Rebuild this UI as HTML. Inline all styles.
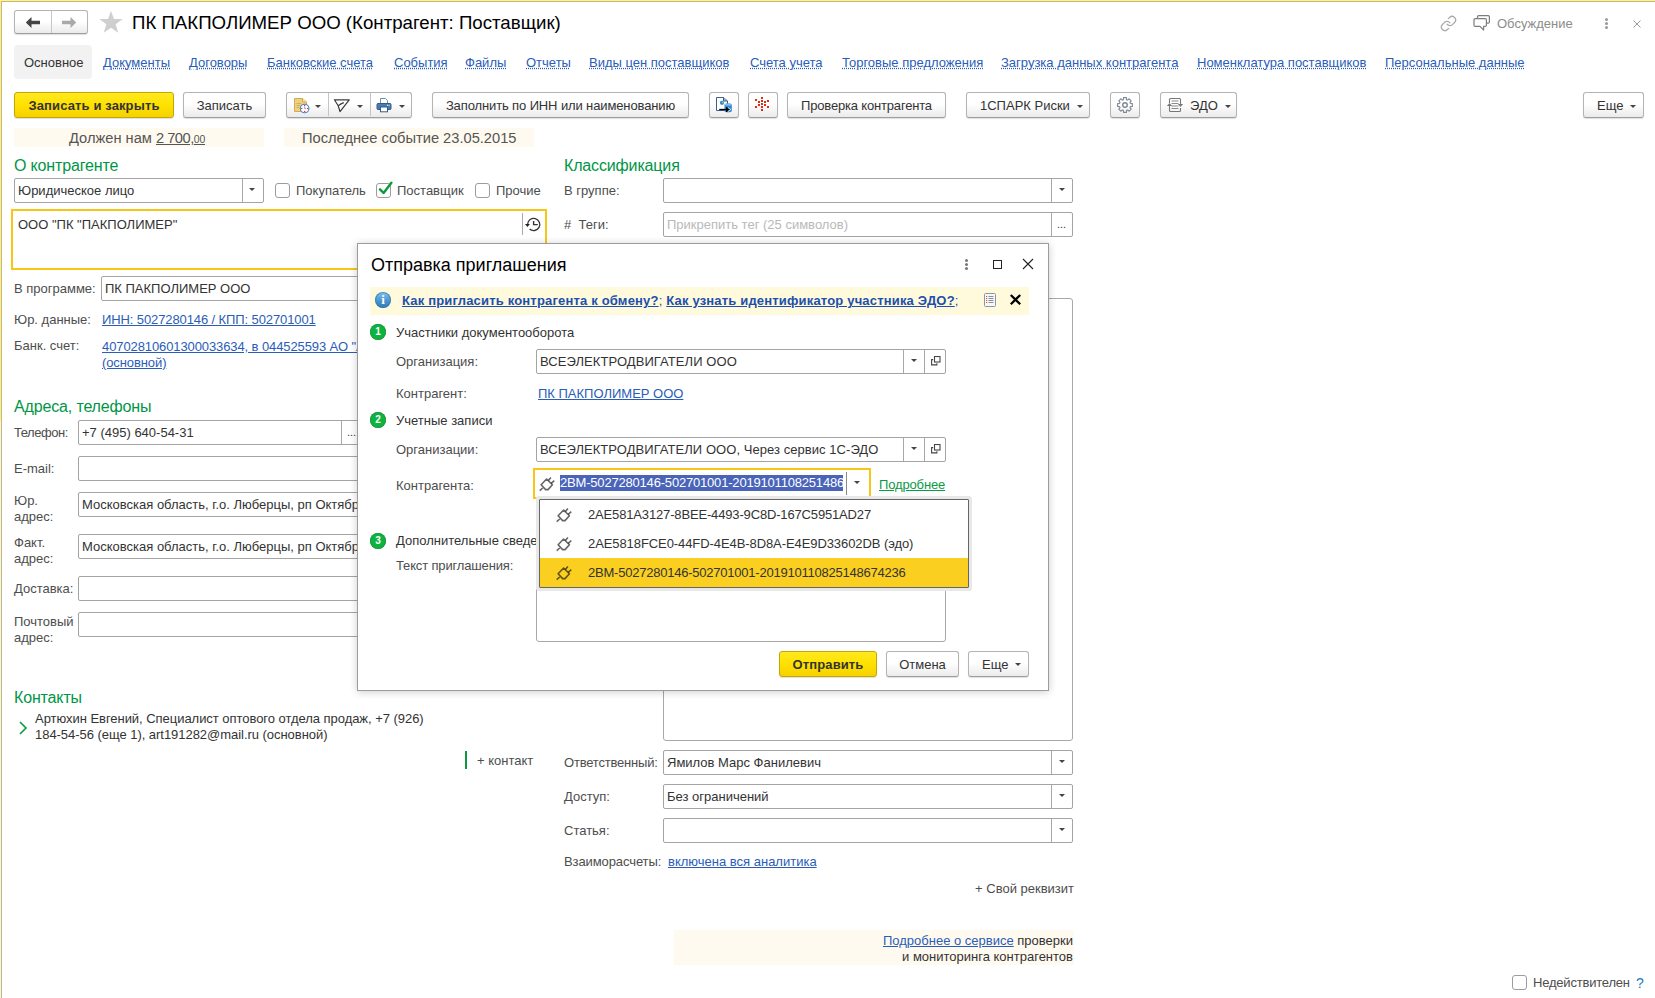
<!DOCTYPE html>
<html lang="ru">
<head>
<meta charset="utf-8">
<title>ПК ПАКПОЛИМЕР ООО (Контрагент: Поставщик)</title>
<style>
*{box-sizing:border-box;margin:0;padding:0}
html,body{width:1655px;height:998px;overflow:hidden;background:#fff}
body{font-family:"Liberation Sans",Arial,sans-serif;font-size:13px;color:#333;position:relative;line-height:16px}
.a{position:absolute;white-space:nowrap}
.edgeT0{left:0;top:0;width:1655px;height:1px;background:#fdf0a0}
.edgeT1{left:0;top:1px;width:1655px;height:1px;background:#c9b866}
.edgeL0{left:0;top:1px;width:1px;height:997px;background:linear-gradient(#fbec9a 0,#fbec9a 420px,#f2f2f2 420px)}
.edgeL1{left:1px;top:1px;width:1px;height:997px;background:#c8ba70}
.btn{position:absolute;height:26px;border:1px solid #b4b4b4;border-radius:3px;background:linear-gradient(#fff 0,#fff 45%,#ebebeb 100%);border-bottom-color:#9e9e9e;box-shadow:0 1px 1px rgba(0,0,0,.13);text-align:center;line-height:25px;color:#333;white-space:nowrap}
.btn.y{letter-spacing:.12px;background:linear-gradient(#ffe920 0,#ffe100 50%,#f5d200 100%);border-color:#c4a700;font-weight:bold}
.lbl{position:absolute;white-space:nowrap;color:#4d4d4d}
.lnk{position:absolute;white-space:nowrap;color:#2a5db8;text-decoration:underline}
.tab{position:absolute;white-space:nowrap;color:#2a5db8;top:55px;text-decoration:underline dotted;text-underline-offset:1px}
.h{position:absolute;white-space:nowrap;color:#009646;font-size:16px;line-height:18px;letter-spacing:-.15px}
.inp{position:absolute;height:25px;border:1px solid #a4a4a4;border-radius:2px;background:#fff;line-height:23px;padding-left:3px;color:#333;white-space:nowrap;overflow:hidden}
.inp .d{position:absolute;top:0;bottom:0;width:1px;background:#a8a8a8}
.arr{position:absolute;width:0;height:0;border-left:3px solid transparent;border-right:3px solid transparent;border-top:3px solid #444}
.arr.s{}
.cb{position:absolute;width:15px;height:15px;border:1px solid #9c9c9c;border-radius:3px;background:#fff}
.circ{position:absolute;width:16px;height:16px;border-radius:50%;background:#0bb43e;box-shadow:inset 0 0 0 1px #1f9c44;color:#fff;font-size:10px;font-weight:bold;line-height:16px;text-align:center}
</style>
</head>
<body>
<div class="a edgeT0"></div><div class="a edgeT1"></div><div class="a edgeL0"></div><div class="a edgeL1"></div>

<!-- header -->
<div id="hdr">
<div class="btn" style="left:14px;top:10px;width:74px;height:24px"></div>
<div class="a" style="left:51px;top:11px;width:1px;height:22px;background:#c8c8c8"></div>
<svg class="a" style="left:24px;top:16px" width="18" height="13" viewBox="0 0 18 13"><path d="M1.8 6.5 L7.5 1 V4.8 H16 V8.2 H7.5 V12 Z" fill="#444"/></svg>
<svg class="a" style="left:60px;top:16px" width="18" height="13" viewBox="0 0 18 13"><path d="M16.2 6.5 L10.5 1 V4.8 H2 V8.2 H10.5 V12 Z" fill="#a9a9a9"/></svg>
<svg class="a" style="left:98px;top:9px" width="26" height="26" viewBox="0 0 24 24"><path d="M12 1.5 L14.7 9.3 H22.8 L16.3 14.1 L18.7 22 L12 17.2 L5.3 22 L7.7 14.1 L1.2 9.3 H9.3 Z" fill="#cfcfcf"/></svg>
<div class="a" style="left:132px;top:11px;font-size:18.67px;line-height:24px;color:#000">ПК ПАКПОЛИМЕР ООО (Контрагент: Поставщик)</div>
<svg class="a" style="left:1440px;top:15px" width="17" height="17" viewBox="0 0 24 24" fill="none" stroke="#a9a9a9" stroke-width="1.8" stroke-linecap="round"><path d="M10 13a5 5 0 0 0 7.54.54l3-3a5 5 0 0 0-7.07-7.07l-1.72 1.71"/><path d="M14 11a5 5 0 0 0-7.54-.54l-3 3a5 5 0 0 0 7.07 7.07l1.71-1.71"/></svg>
<svg class="a" style="left:1473px;top:14px" width="18" height="18" viewBox="0 0 18 18" fill="none" stroke="#7d7d7d" stroke-width="1.2" stroke-linejoin="round"><path d="M4.5 4.2 V2.8 Q4.5 1.6 5.7 1.6 H15.2 Q16.4 1.6 16.4 2.8 V8 Q16.4 9.2 15.2 9.2 H13.6"/><path d="M2.2 4.6 H12.2 Q13.4 4.6 13.4 5.8 V11.2 Q13.4 12.4 12.2 12.4 H10.6 V16 L7 12.4 H2.2 Q1 12.4 1 11.2 V5.8 Q1 4.6 2.2 4.6 Z"/></svg>
<div class="a" style="left:1497px;top:16px;color:#8c8c8c">Обсуждение</div>
<div class="a" style="left:1605px;top:18px;width:3px;height:3px;border-radius:50%;background:#9a9a9a;box-shadow:0 4px 0 #9a9a9a,0 8px 0 #9a9a9a"></div>
<svg class="a" style="left:1633px;top:20px" width="8" height="8" viewBox="0 0 8 8" stroke="#9a9a9a" stroke-width="1"><path d="M0.5 0.5 L7.5 7.5 M7.5 0.5 L0.5 7.5"/></svg>
</div>
<!-- tabs -->
<div id="tabs">
<div class="a" style="left:14px;top:45px;width:78px;height:34px;border-radius:4px;background:#f2f2f2"></div>
<div class="a" style="left:24px;top:55px;color:#333">Основное</div>
<div class="tab" style="left:103px">Документы</div>
<div class="tab" style="left:189px">Договоры</div>
<div class="tab" style="left:267px">Банковские счета</div>
<div class="tab" style="left:394px">События</div>
<div class="tab" style="left:465px">Файлы</div>
<div class="tab" style="left:526px">Отчеты</div>
<div class="tab" style="left:589px">Виды цен поставщиков</div>
<div class="tab" style="left:750px">Счета учета</div>
<div class="tab" style="left:842px">Торговые предложения</div>
<div class="tab" style="left:1001px">Загрузка данных контрагента</div>
<div class="tab" style="left:1197px">Номенклатура поставщиков</div>
<div class="tab" style="left:1385px">Персональные данные</div>
</div>
<!-- toolbar -->
<div id="tb">
<div class="btn y" style="left:14px;top:92px;width:160px">Записать и закрыть</div>
<div class="btn" style="left:183px;top:92px;width:83px">Записать</div>
<div class="btn" style="left:286px;top:92px;width:126px"></div>
<div class="a" style="left:328px;top:93px;width:1px;height:23px;background:#c4c4c4"></div>
<div class="a" style="left:370px;top:93px;width:1px;height:23px;background:#c4c4c4"></div>
<div class="arr" style="left:315px;top:105px"></div>
<div class="arr" style="left:357px;top:105px"></div>
<div class="arr" style="left:399px;top:105px"></div>
<div class="btn" style="left:432px;top:92px;width:257px;letter-spacing:-.12px">Заполнить по ИНН или наименованию</div>
<div class="btn" style="left:709px;top:92px;width:30px"></div>
<div class="btn" style="left:748px;top:92px;width:30px"></div>
<div class="btn" style="left:787px;top:92px;width:159px;letter-spacing:-.18px">Проверка контрагента</div>
<div class="btn" style="left:966px;top:92px;width:124px;text-align:left;padding-left:13px">1СПАРК Риски</div>
<div class="arr" style="left:1077px;top:105px"></div>
<div class="btn" style="left:1110px;top:92px;width:30px"></div>
<div class="btn" style="left:1160px;top:92px;width:77px;text-align:left;padding-left:29px">ЭДО</div>
<div class="arr" style="left:1225px;top:105px"></div>
<div class="btn" style="left:1583px;top:92px;width:61px;text-align:left;padding-left:13px">Еще</div>
<div class="arr" style="left:1630px;top:105px"></div>

<svg class="a" style="left:292px;top:96px" width="20" height="18" viewBox="0 0 20 18"><path d="M2.5 2.5 H10.5 L14.5 6 V15.5 H2.5 Z" fill="#ecd083" stroke="#d6ab4e" stroke-width="1"/><path d="M10.5 2.5 V6 H14.5" fill="#f7e6ae" stroke="#d6ab4e" stroke-width="1"/><path d="M4.5 7.5 H9 M4.5 9.5 H8 M4.5 11.5 H7" stroke="#d2ae5a" stroke-width="1"/><circle cx="12.6" cy="12.5" r="4.3" fill="#fff" stroke="#4a86c8" stroke-width="1.1"/><rect x="12.1" y="8.9" width="1.2" height="1.2" fill="#e22"/><rect x="12.1" y="14.9" width="1.2" height="1.2" fill="#e22"/><rect x="9.1" y="11.9" width="1.2" height="1.2" fill="#e22"/><rect x="15.1" y="11.9" width="1.2" height="1.2" fill="#e22"/><path d="M12.7 10.4 V12.6 H14.2" stroke="#88a" stroke-width=".8" fill="none"/></svg>
<svg class="a" style="left:332px;top:97px" width="20" height="17" viewBox="0 0 20 17" fill="none" stroke="#3c3c3c" stroke-width="1.2" stroke-linejoin="round"><path d="M2.4 2.8 H17.2 L8 14.6 L6.2 8.8 Z"/><path d="M6.2 8.8 Q9 6.6 11.8 5.6"/></svg>
<svg class="a" style="left:376px;top:97px" width="16" height="16" viewBox="0 0 16 16"><path d="M4.5 1.5 H9.5 L11.5 3.5 V6.5 H4.5 Z" fill="#fff" stroke="#6d8fb5" stroke-width="1"/><rect x="1" y="6.5" width="14" height="6" rx="1" fill="#4c7bab" stroke="#2f5c8c" stroke-width="1"/><rect x="11" y="7.8" width="1" height="1" fill="#fff"/><rect x="12.6" y="7.8" width="1" height="1" fill="#fff"/><rect x="4.5" y="10" width="7" height="4.8" fill="#fff" stroke="#2f5c8c" stroke-width="1"/></svg>
<svg class="a" style="left:715px;top:96px" width="19" height="18" viewBox="0 0 19 18"><path d="M1.5 1.5 H8.5 L12.5 5 V14.5 H1.5 Z" fill="#fff" stroke="#3f5f86" stroke-width="1"/><path d="M8.5 1.5 V5 H12.5" fill="#9fb2cc" stroke="#3f5f86" stroke-width="1"/><circle cx="7" cy="6.8" r="2.1" fill="#2f7fd6"/><circle cx="7.6" cy="6.4" r=".9" fill="#8fd24a"/><path d="M9.5 8.8 C9.5 7.2 16.8 7.2 16.8 8.8 V15 C16.8 16.8 9.5 16.8 9.5 15 Z" fill="#2f86cc"/><ellipse cx="13.15" cy="8.6" rx="3.65" ry="1.2" fill="#7fc1ee"/><path d="M4.2 13.5 H11.5" stroke="#000" stroke-width="1.3"/><path d="M11 10.8 L15.2 13.5 L11 16.2 Z" fill="#000"/><path d="M13 11.6 L15.8 13.5 L13 15.4" fill="none" stroke="#fff" stroke-width=".8"/></svg>
<div class="a" style="left:761px;top:97px;width:2px;height:2px;background:#de2d15"></div><div class="a" style="left:755px;top:99px;width:2px;height:2px;background:#de2d15"></div><div class="a" style="left:767px;top:100px;width:2px;height:2px;background:#de2d15"></div><div class="a" style="left:761px;top:100px;width:2px;height:2px;background:#de2d15"></div><div class="a" style="left:758px;top:101px;width:2px;height:2px;background:#de2d15"></div><div class="a" style="left:764px;top:101px;width:2px;height:2px;background:#de2d15"></div><div class="a" style="left:761px;top:103px;width:2px;height:2px;background:#de2d15"></div><div class="a" style="left:758px;top:104px;width:2px;height:2px;background:#de2d15"></div><div class="a" style="left:764px;top:104px;width:2px;height:2px;background:#de2d15"></div><div class="a" style="left:755px;top:106px;width:2px;height:2px;background:#de2d15"></div><div class="a" style="left:767px;top:106px;width:2px;height:2px;background:#de2d15"></div><div class="a" style="left:761px;top:106px;width:2px;height:2px;background:#de2d15"></div><div class="a" style="left:761px;top:109px;width:2px;height:2px;background:#de2d15"></div>
<svg class="a" style="left:1116px;top:96px" width="18" height="18" viewBox="0 0 18 18" fill="none" stroke="#7f8896" stroke-width="1.1" stroke-linejoin="round"><path d="M7.40 3.63 L7.58 1.63 L10.42 1.63 L10.60 3.63 A5.6 5.6 0 0 1 11.66 4.07 L11.66 4.07 L13.21 2.79 L15.21 4.79 L13.93 6.34 A5.6 5.6 0 0 1 14.37 7.40 L14.37 7.40 L16.37 7.58 L16.37 10.42 L14.37 10.60 A5.6 5.6 0 0 1 13.93 11.66 L13.93 11.66 L15.21 13.21 L13.21 15.21 L11.66 13.93 A5.6 5.6 0 0 1 10.60 14.37 L10.60 14.37 L10.42 16.37 L7.58 16.37 L7.40 14.37 A5.6 5.6 0 0 1 6.34 13.93 L6.34 13.93 L4.79 15.21 L2.79 13.21 L4.07 11.66 A5.6 5.6 0 0 1 3.63 10.60 L3.63 10.60 L1.63 10.42 L1.63 7.58 L3.63 7.40 A5.6 5.6 0 0 1 4.07 6.34 L4.07 6.34 L2.79 4.79 L4.79 2.79 L6.34 4.07 A5.6 5.6 0 0 1 7.40 3.63 Z"/><circle cx="9" cy="9" r="2.3" stroke-width="1.4"/></svg>
<svg class="a" style="left:1166px;top:97px" width="18" height="16" viewBox="0 0 18 16" fill="none" stroke="#777" stroke-width="1.1"><path d="M3.5 6 V2.5 Q3.5 1.5 4.5 1.5 H13.5 Q14.5 1.5 14.5 2.5 V7"/><path d="M14.5 11 V13.5 Q14.5 14.5 13.5 14.5 H4.5 Q3.5 14.5 3.5 13.5 V9"/><path d="M5.5 4 H12.5 M5.5 6.5 H12.5 M5.5 9 H12.5 M5.5 11.5 H12.5" stroke="#8a8a8a"/><path d="M0.8 9 L3.5 6 L6.2 9 Z" fill="#777" stroke="none"/><path d="M11.8 7 L14.5 10 L17.2 7 Z" fill="#777" stroke="none"/></svg>
<div class="a" style="left:14px;top:128px;width:250px;height:19px;background:#fffaf0"></div>
<div class="a" style="left:284px;top:128px;width:250px;height:19px;background:#fffaf0"></div>
<div class="a" style="left:69px;top:129px;font-size:14.67px;line-height:18px;color:#555">Должен нам <span style="text-decoration:underline;letter-spacing:-.5px">2 700,<span style="font-size:10.5px;letter-spacing:-.2px">00</span></span></div>
<div class="a" style="left:302px;top:129px;font-size:14.67px;line-height:18px;color:#555">Последнее событие 23.05.2015</div>
</div>
<!-- left column -->
<div id="left">
<div class="h" style="left:14px;top:157px">О контрагенте</div>
<div class="inp" style="left:14px;top:178px;width:250px">Юридическое лицо<span class="d" style="left:227px"></span></div>
<div class="arr s" style="left:249px;top:188px"></div>
<div class="cb" style="left:275px;top:183px"></div><div class="lbl" style="left:296px;top:183px">Покупатель</div>
<div class="cb" style="left:376px;top:183px"></div><div class="lbl" style="left:397px;top:183px">Поставщик</div>
<svg class="a" style="left:376px;top:179px" width="18" height="18" viewBox="0 0 18 18" fill="none" stroke="#0a9a3c" stroke-width="2.4" stroke-linecap="round" stroke-linejoin="round"><path d="M4 10.3 L7.6 14 L15.4 3.8"/></svg>
<div class="cb" style="left:475px;top:183px"></div><div class="lbl" style="left:496px;top:183px">Прочие</div>
<div class="a" style="left:11px;top:209px;width:536px;height:61px;border:2px solid #f8c614;background:#fff"></div>
<div class="a" style="left:18px;top:217px;color:#333">ООО "ПК "ПАКПОЛИМЕР"</div>
<div class="a" style="left:522px;top:213px;width:1px;height:22px;background:#aaa"></div>
<svg class="a" style="left:524px;top:215px" width="20" height="20" viewBox="0 0 20 20" fill="none" stroke="#333" stroke-width="1.3"><path d="M3.6 9.2 A6.1 6.1 0 1 1 5.6 14"/><path d="M9.6 6 V9.6 H13.8" stroke-width="1.4"/><path d="M1 9.1 H5.9 L3.45 11.9 Z" fill="#222" stroke="none"/></svg>
<div class="lbl" style="left:14px;top:281px">В программе:</div>
<div class="inp" style="left:101px;top:276px;width:300px">ПК ПАКПОЛИМЕР ООО</div>
<div class="lbl" style="left:14px;top:312px">Юр. данные:</div>
<div class="lnk" style="left:102px;top:312px;letter-spacing:-.105px">ИНН: 5027280146 / КПП: 502701001</div>
<div class="lbl" style="left:14px;top:338px">Банк. счет:</div>
<div class="lnk" style="left:102px;top:339px;letter-spacing:-.1px">40702810601300033634, в 044525593 АО "АЛЬФА-БАНК"<br>(основной)</div>
<div class="h" style="left:14px;top:398px">Адреса, телефоны</div>
<div class="lbl" style="left:14px;top:425px;letter-spacing:-.45px">Телефон:</div>
<div class="inp" style="left:78px;top:420px;width:300px">+7 (495) 640-54-31<span class="d" style="left:262px"></span><span style="position:absolute;left:268px;top:0;font-size:11px;color:#333">...</span></div>
<div class="lbl" style="left:14px;top:461px">E-mail:</div>
<div class="inp" style="left:78px;top:456px;width:300px"></div>
<div class="lbl" style="left:14px;top:493px;white-space:normal;width:60px">Юр.<br>адрес:</div>
<div class="inp" style="left:78px;top:492px;width:300px">Московская область, г.о. Люберцы, рп Октябрьский</div>
<div class="lbl" style="left:14px;top:535px">Факт.<br>адрес:</div>
<div class="inp" style="left:78px;top:534px;width:300px">Московская область, г.о. Люберцы, рп Октябрьский</div>
<div class="lbl" style="left:14px;top:581px">Доставка:</div>
<div class="inp" style="left:78px;top:576px;width:300px"></div>
<div class="lbl" style="left:14px;top:614px">Почтовый<br>адрес:</div>
<div class="inp" style="left:78px;top:612px;width:300px"></div>
<div class="h" style="left:14px;top:689px">Контакты</div>
<svg class="a" style="left:18px;top:720px" width="10" height="16" viewBox="0 0 10 16" fill="none" stroke="#0a9a3c" stroke-width="1.6"><path d="M2 2 L8 8 L2 14"/></svg>
<div class="a" style="left:35px;top:711px;color:#333;letter-spacing:-.04px">Артюхин Евгений, Специалист оптового отдела продаж, +7 (926)<br>184-54-56 (еще 1), art191282@mail.ru (основной)</div>
<div class="a" style="left:465px;top:751px;width:2px;height:18px;background:#0a9a3c"></div>
<div class="lbl" style="left:477px;top:753px">+ контакт</div>
</div>
<!-- right column -->
<div id="right">
<div class="h" style="left:564px;top:157px">Классификация</div>
<div class="lbl" style="left:564px;top:183px">В группе:</div>
<div class="inp" style="left:663px;top:178px;width:410px"><span class="d" style="left:387px"></span></div>
<div class="arr s" style="left:1059px;top:188px"></div>
<div class="lbl" style="left:564px;top:217px">#&nbsp; Теги:</div>
<div class="inp" style="left:663px;top:212px;width:410px;color:#b9b9b9">Прикрепить тег (25 символов)<span class="d" style="left:387px"></span><span style="position:absolute;left:393px;top:0;font-size:11px;color:#333">...</span></div>
<div class="a" style="left:663px;top:298px;width:410px;height:443px;border:1px solid #a8a8a8;border-radius:3px;background:#fff"></div>
<div class="lbl" style="left:564px;top:755px;letter-spacing:-.2px">Ответственный:</div>
<div class="inp" style="left:663px;top:750px;width:410px">Ямилов Марс Фанилевич<span class="d" style="left:387px"></span></div>
<div class="arr s" style="left:1059px;top:760px"></div>
<div class="lbl" style="left:564px;top:789px">Доступ:</div>
<div class="inp" style="left:663px;top:784px;width:410px">Без ограничений<span class="d" style="left:387px"></span></div>
<div class="arr s" style="left:1059px;top:794px"></div>
<div class="lbl" style="left:564px;top:823px">Статья:</div>
<div class="inp" style="left:663px;top:818px;width:410px"><span class="d" style="left:387px"></span></div>
<div class="arr s" style="left:1059px;top:828px"></div>
<div class="lbl" style="left:564px;top:854px;letter-spacing:-.1px">Взаиморасчеты:</div>
<div class="lnk" style="left:668px;top:854px">включена вся аналитика</div>
<div class="lbl" style="right:581px;top:881px">+ Свой реквизит</div>
<div class="a" style="left:674px;top:930px;width:400px;height:35px;background:#fffaf0"></div>
<div class="a" style="right:582px;top:933px;text-align:right;color:#333"><span style="color:#2a5db8;text-decoration:underline">Подробнее о сервисе</span> проверки<br>и мониторинга контрагентов</div>
<div class="cb" style="left:1512px;top:975px"></div>
<div class="lbl" style="left:1533px;top:975px;letter-spacing:-.2px">Недействителен</div>
<div class="a" style="left:1636px;top:975px;color:#1a7ac8;font-size:14px">?</div>
</div>
<!-- dialog -->
<div id="dlg">
<div class="a" style="left:357px;top:243px;width:692px;height:448px;background:#fff;border:1px solid #9c9c9c;box-shadow:0 1px 8px rgba(0,0,0,.2)"></div>
<div class="a" style="left:371px;top:253px;font-size:18px;line-height:24px;color:#000">Отправка приглашения</div>
<div class="a" style="left:965px;top:259px;width:3px;height:3px;border-radius:50%;background:#777;box-shadow:0 4px 0 #777,0 8px 0 #777"></div>
<div class="a" style="left:993px;top:260px;width:9px;height:9px;border:1px solid #222"></div>
<svg class="a" style="left:1022px;top:258px" width="12" height="12" viewBox="0 0 12 12" stroke="#222" stroke-width="1.1"><path d="M1 1 L11 11 M11 1 L1 11"/></svg>
<div class="a" style="left:370px;top:287px;width:659px;height:28px;background:#fffadb"></div>
<div class="a" style="left:375px;top:292px;width:16px;height:16px;border-radius:50%;background:linear-gradient(#84c3ec,#4a95cf 55%,#2f7bb8);box-shadow:inset 0 0 0 1px rgba(40,110,170,.55);color:#fff;font-weight:bold;font-size:13px;line-height:16px;text-align:center;font-family:'Liberation Serif',serif">i</div>
<div class="a" style="left:402px;top:293px;color:#1c4fae;font-weight:bold;letter-spacing:.18px"><span style="text-decoration:underline">Как пригласить контрагента к обмену?</span><span style="font-weight:normal">; </span><span style="text-decoration:underline">Как узнать идентификатор участника ЭДО?</span><span style="font-weight:normal">;</span></div>
<svg class="a" style="left:984px;top:293px" width="12" height="14" viewBox="0 0 12 14"><rect x="0.5" y="0.5" width="11" height="13" rx="1" fill="#f6f7f9" stroke="#8896aa"/><path d="M4.5 3.5 H9.5 M4.5 5.5 H9.5 M4.5 7.5 H9.5 M4.5 9.5 H9.5" stroke="#8a8f98" stroke-width="1"/><path d="M2 3.5 H3.2 M2 5.5 H3.2 M2 7.5 H3.2 M2 9.5 H3.2" stroke="#d9531e" stroke-width="1"/></svg>
<svg class="a" style="left:1009px;top:293px" width="13" height="13" viewBox="0 0 13 13" stroke="#000" stroke-width="2.3"><path d="M1.8 2 L11.2 11.2 M11.2 2 L1.8 11.2"/></svg>

<div class="circ" style="left:370px;top:324px">1</div>
<div class="a" style="left:396px;top:325px;color:#333">Участники документооборота</div>
<div class="lbl" style="left:396px;top:354px">Организация:</div>
<div class="inp" style="left:536px;top:349px;width:410px;letter-spacing:.07px">ВСЕЭЛЕКТРОДВИГАТЕЛИ ООО<span class="d" style="left:366px"></span><span class="d" style="left:387px"></span></div>
<div class="arr s" style="left:911px;top:359px"></div><svg class="a" style="left:931px;top:356px" width="10" height="10" viewBox="0 0 10 10" fill="none" stroke="#444" stroke-width="1.1"><rect x="3.5" y="0.5" width="5.5" height="5.5"/><path d="M2.2 3.6 H0.6 V8.9 H5.9 V7.2"/></svg>
<div class="lbl" style="left:396px;top:386px">Контрагент:</div>
<div class="lnk" style="left:538px;top:386px">ПК ПАКПОЛИМЕР ООО</div>
<div class="circ" style="left:370px;top:412px">2</div>
<div class="a" style="left:396px;top:413px;color:#333">Учетные записи</div>
<div class="lbl" style="left:396px;top:442px">Организации:</div>
<div class="inp" style="left:536px;top:437px;width:410px;letter-spacing:.052px">ВСЕЭЛЕКТРОДВИГАТЕЛИ ООО, Через сервис 1С-ЭДО<span class="d" style="left:366px"></span><span class="d" style="left:387px"></span></div>
<div class="arr s" style="left:911px;top:447px"></div><svg class="a" style="left:931px;top:444px" width="10" height="10" viewBox="0 0 10 10" fill="none" stroke="#444" stroke-width="1.1"><rect x="3.5" y="0.5" width="5.5" height="5.5"/><path d="M2.2 3.6 H0.6 V8.9 H5.9 V7.2"/></svg>
<div class="lbl" style="left:396px;top:478px">Контрагента:</div>
<div class="a" style="left:533px;top:468px;width:338px;height:31px;border:2px solid #f8c614;background:#fff"></div>
<svg class="a" style="left:539px;top:476px" width="17" height="16" viewBox="0 0 17 16" fill="none" stroke="#000" stroke-opacity=".6" stroke-width="1.6" stroke-linejoin="round"><path d="M0.7 14.7 L3.7 12"/><path d="M2.1 8.7 L7.6 3 L13.4 8.8 L9 13.6 L6.6 13.6 Z"/><path d="M9.4 4.6 L11.9 1.5 M12.2 7.4 L15.3 4.6"/></svg>
<div class="a" style="left:560px;top:475px;height:16px;line-height:16px;background:#4a64ba;color:#fff;padding-left:0;width:283px;overflow:hidden;letter-spacing:-.19px">2BM-5027280146-502701001-2019101108251486</div>
<div class="a" style="left:846px;top:472px;width:1px;height:23px;background:#8c8c8c"></div>
<div class="arr s" style="left:854px;top:481px"></div>
<div class="a" style="left:879px;top:477px;color:#0a9a46;text-decoration:underline;letter-spacing:-.15px">Подробнее</div>

<div class="circ" style="left:370px;top:533px">3</div>
<div class="a" style="left:396px;top:533px;color:#333">Дополнительные сведения</div>
<div class="lbl" style="left:396px;top:558px;letter-spacing:-.15px">Текст приглашения:</div>
<div class="a" style="left:536px;top:553px;width:410px;height:89px;border:1px solid #a8a8a8;border-radius:3px;background:#fff"></div>

<div class="a" style="left:539px;top:499px;width:430px;height:89px;background:#fff;border:1px solid #666;border-radius:1px;box-shadow:0 0 0 3px #e8e8e8"></div>
<div class="a" style="left:540px;top:558px;width:428px;height:29px;background:#fbcf20"></div>
<svg class="a" style="left:556px;top:507px" width="17" height="16" viewBox="0 0 17 16" fill="none" stroke="#000" stroke-opacity=".6" stroke-width="1.6" stroke-linejoin="round"><path d="M0.7 14.7 L3.7 12"/><path d="M2.1 8.7 L7.6 3 L13.4 8.8 L9 13.6 L6.6 13.6 Z"/><path d="M9.4 4.6 L11.9 1.5 M12.2 7.4 L15.3 4.6"/></svg>
<div class="a" style="left:588px;top:507px;color:#333;letter-spacing:-.156px">2AE581A3127-8BEE-4493-9C8D-167C5951AD27</div>
<svg class="a" style="left:556px;top:536px" width="17" height="16" viewBox="0 0 17 16" fill="none" stroke="#000" stroke-opacity=".6" stroke-width="1.6" stroke-linejoin="round"><path d="M0.7 14.7 L3.7 12"/><path d="M2.1 8.7 L7.6 3 L13.4 8.8 L9 13.6 L6.6 13.6 Z"/><path d="M9.4 4.6 L11.9 1.5 M12.2 7.4 L15.3 4.6"/></svg>
<div class="a" style="left:588px;top:536px;color:#333;letter-spacing:-.082px">2AE5818FCE0-44FD-4E4B-8D8A-E4E9D33602DB (эдо)</div>
<svg class="a" style="left:556px;top:565px" width="17" height="16" viewBox="0 0 17 16" fill="none" stroke="#000" stroke-opacity=".6" stroke-width="1.6" stroke-linejoin="round"><path d="M0.7 14.7 L3.7 12"/><path d="M2.1 8.7 L7.6 3 L13.4 8.8 L9 13.6 L6.6 13.6 Z"/><path d="M9.4 4.6 L11.9 1.5 M12.2 7.4 L15.3 4.6"/></svg>
<div class="a" style="left:588px;top:565px;color:#333;letter-spacing:-.225px">2BM-5027280146-502701001-201910110825148674236</div>

<div class="btn y" style="left:779px;top:651px;width:98px">Отправить</div>
<div class="btn" style="left:886px;top:651px;width:73px">Отмена</div>
<div class="btn" style="left:968px;top:651px;width:61px;text-align:left;padding-left:13px">Еще</div>
<div class="arr" style="left:1015px;top:663px"></div>
</div>
</body>
</html>
